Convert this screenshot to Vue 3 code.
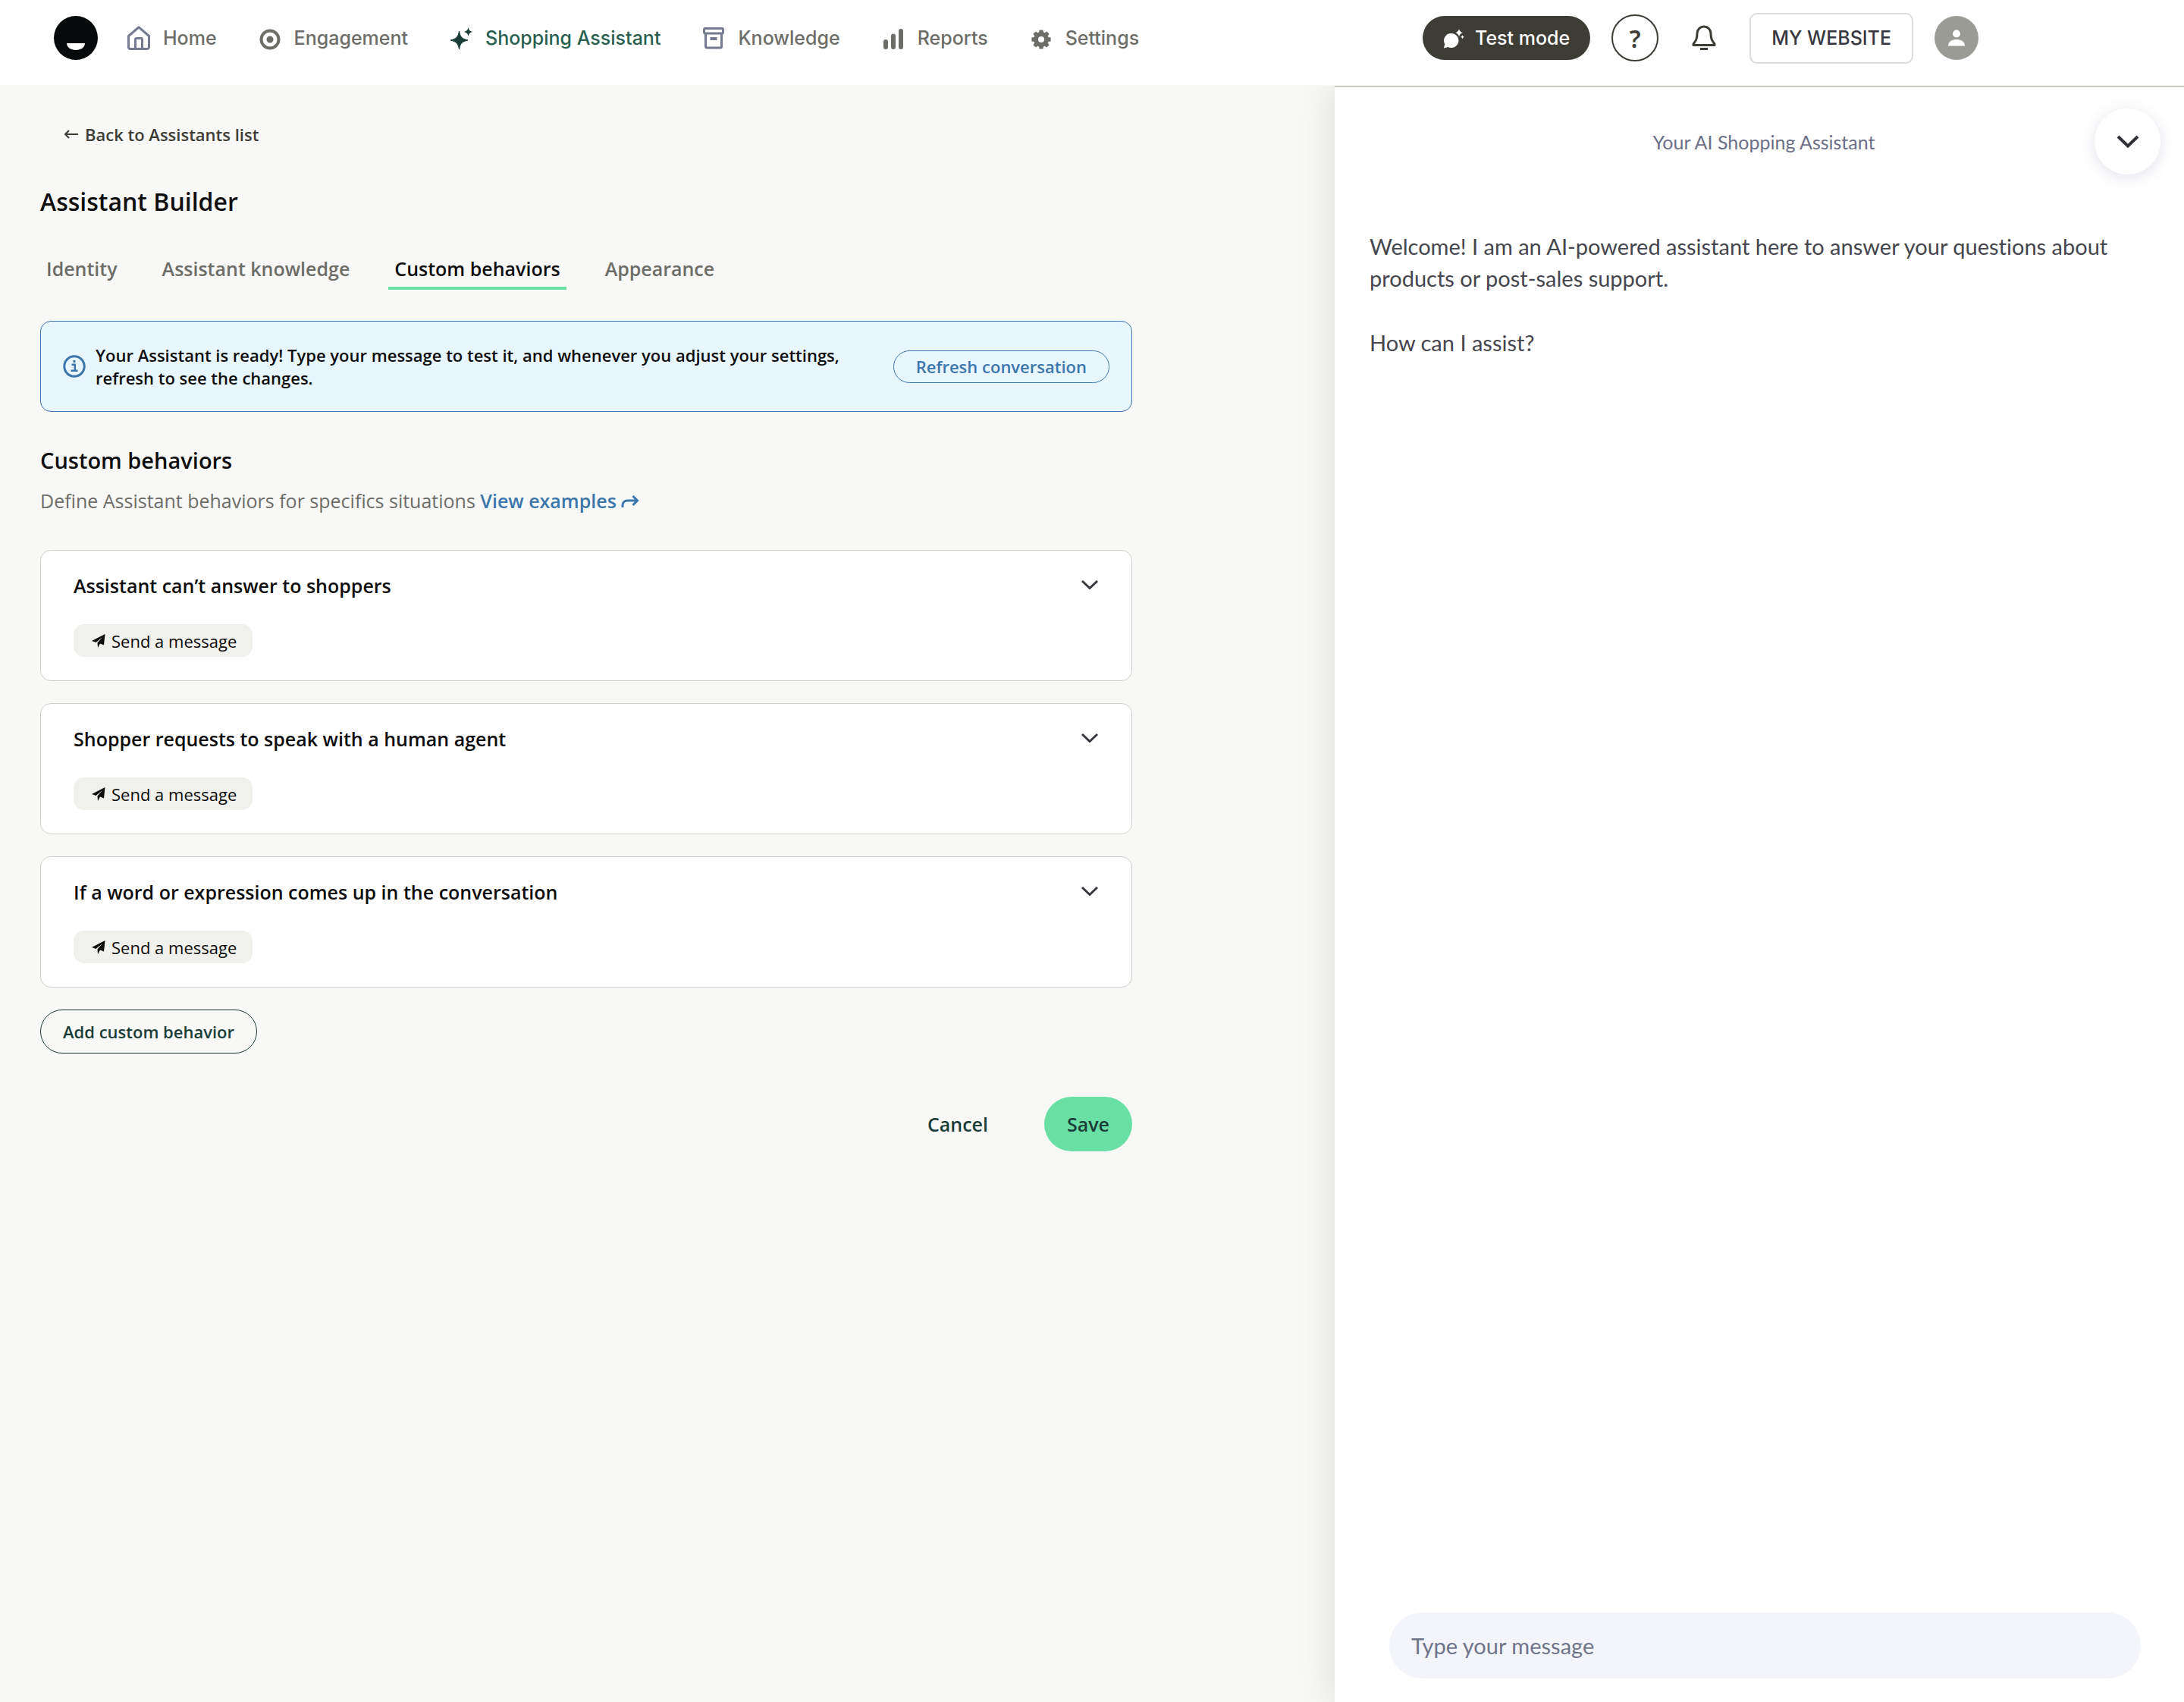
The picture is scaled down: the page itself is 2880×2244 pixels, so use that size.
<template>
  <div class="app">
    <header class="topbar">
      <a href="#" class="logo" aria-label="Homepage">
        <svg viewBox="0 0 58 58"><circle cx="29" cy="29" r="29" fill="#060a0a" /><path d="M17 36h24c0 5-5 9-12 9s-12-4-12-9z" fill="#fff" /></svg>
      </a>
      <nav class="main-nav">
        <a v-for="item in navItems" :key="item.label" href="#" class="nav-link" :class="{ active: item.active }">
          <svg v-if="item.icon === 'home'" class="nav-icon" viewBox="0 0 30 32" fill="none" stroke="#747a90" stroke-width="3">
            <path d="M1.500 13.500L15 1.800l13.500 11.700V28a2.500 2.500 0 0 1-2.500 2.500H4A2.500 2.500 0 0 1 1.500 28z" stroke-linejoin="round" />
            <path d="M10.500 30V18a1.500 1.500 0 0 1 1.500-1.500h6a1.500 1.500 0 0 1 1.500 1.500v12" />
          </svg>
          <svg v-else-if="item.icon === 'target'" class="nav-icon" viewBox="0 0 30 32">
            <circle cx="15" cy="18" r="11.500" fill="none" stroke="#6d6d68" stroke-width="4" />
            <circle cx="15" cy="18" r="4.500" fill="#6d6d68" />
          </svg>
          <svg v-else-if="item.icon === 'sparkle'" class="nav-icon" viewBox="0 0 30 32" fill="#1a3d38">
            <path d="M12.500 7c1.500 8 3.500 10 11.500 12-8 2-10 4-11.500 12C11 23 9 21 1 19c8-2 10-4 11.500-12z" stroke="#1a3d38" stroke-width="1" />
            <path d="M24.500 2c.8 3.800 1.700 4.700 5.500 6-3.800 1.300-4.700 2.200-5.500 6-.8-3.800-1.700-4.700-5.500-6 3.800-1.300 4.700-2.200 5.500-6z" />
          </svg>
          <svg v-else-if="item.icon === 'box'" class="nav-icon" viewBox="0 0 30 32">
            <g fill="none" stroke="#747a90" stroke-width="3">
              <rect x="2.500" y="3.500" width="25" height="6.500" rx="1.500" />
              <path d="M4.500 10v17a2 2 0 0 0 2 2h17a2 2 0 0 0 2-2V10" />
            </g>
            <rect x="10.500" y="15" width="9" height="4" fill="#747a90" />
          </svg>
          <svg v-else-if="item.icon === 'bars'" class="nav-icon" viewBox="0 0 30 32" stroke="#6d6d68" stroke-width="6" stroke-linecap="round">
            <path d="M5 21v7M15 13.500V28M25 7v21" />
          </svg>
          <svg v-else class="nav-icon" viewBox="0 0 30 32">
            <circle cx="15" cy="18" r="7" fill="none" stroke="#6d6d68" stroke-width="6" />
            <path v-for="n in 8" :key="n" d="M12 9l.6-3.600h4.800L18 9z" fill="#6d6d68" :transform="`rotate(${n * 45} 15 18)`" />
          </svg>
          {{ item.label }}
        </a>
      </nav>
      <div class="actions">
        <button class="test-mode">
          <svg viewBox="0 0 28 28" fill="#fff">
            <path d="M11 8a9.500 9.500 0 1 1-4.500 17.900L1 27.500l1.200-5.500A9.500 9.500 0 0 1 11 8z" />
            <path d="M21 0c1 5 2 6 6 7-4 1.500-5 2.500-6 7-1-4.500-2-5.500-6-7 4-1 5-2 6-7z" stroke="#3d3d36" stroke-width="1" />
            <path d="M25.500 10c.4 1.800.8 2.200 2.500 2.700-1.700.6-2.100 1-2.500 2.700-.4-1.700-.8-2.100-2.500-2.700 1.700-.5 2.100-.9 2.500-2.700z" />
          </svg>
          Test mode
        </button>
        <button class="help" aria-label="Help">?</button>
        <button class="bell" aria-label="Notifications">
          <svg viewBox="0 0 32 34" fill="none" stroke="#3d3d36" stroke-width="3">
            <path d="M16 2a9 9 0 0 0-9 9c0 7-1.500 9.500-5 14v1.500h28V25c-3.500-4.500-5-7-5-14a9 9 0 0 0-9-9z" stroke-linejoin="round" />
            <path d="M11 31.500h10" />
          </svg>
        </button>
        <button class="website">MY WEBSITE</button>
        <button class="avatar" aria-label="Account">
          <svg viewBox="0 0 22 22" fill="#fff"><circle cx="11" cy="5.500" r="5" /><path d="M0 21.500c0-5 4-8.500 11-8.500s11 3.500 11 8.500z" /></svg>
        </button>
      </div>
    </header>

    <div class="content">
      <main class="builder">
        <a href="#" class="back">
          <svg viewBox="0 0 20 16" fill="none" stroke="#3d3d36" stroke-width="2"><path d="M7 3L2 8l5 5M2 8h17" /></svg>
          Back to Assistants list
        </a>
        <h1>Assistant Builder</h1>
        <div class="tabs" role="tablist">
          <button
            v-for="tab in tabs"
            :key="tab"
            role="tab"
            class="tab"
            :class="{ selected: tab === currentTab }"
            :aria-selected="tab === currentTab"
            @click="currentTab = tab"
          >{{ tab }}</button>
        </div>

        <div class="banner">
          <svg class="info" viewBox="0 0 30 30" fill="none" stroke="#3c76ab">
            <circle cx="15" cy="15" r="13.200" stroke-width="3" />
            <path d="M11.500 12.800h4.300v8M10.500 20.800h9" stroke-width="2.400" />
            <circle cx="15" cy="8.500" r="1.700" fill="#3c76ab" stroke="none" />
          </svg>
          <p>Your Assistant is ready! Type your message to test it, and whenever you adjust your settings, refresh to see the changes.</p>
          <button class="refresh">Refresh conversation</button>
        </div>

        <h2>Custom behaviors</h2>
        <p class="description">
          Define Assistant behaviors for specifics situations
          <a href="#">View examples <svg viewBox="0 0 24 18" fill="none" stroke="#3c76ab" stroke-width="3"><path d="M2 17v-3a6 6 0 0 1 6-6h13M15.500 2l6 6-6 6" /></svg></a>
        </p>

        <section v-for="behavior in behaviors" :key="behavior" class="card">
          <div class="card-head">
            <h3>{{ behavior }}</h3>
            <button class="toggle" aria-label="Expand">
              <svg viewBox="0 0 24 16" fill="none" stroke="#36373f" stroke-width="3"><path d="M2 3l10 9.500L22 3" /></svg>
            </button>
          </div>
          <span class="chip">
            <svg viewBox="0 0 18 18" fill="#0d0d0d"><path d="M17.500 0L16 14.500l-5-2L8 18l-.5-6.500L14 4 5.500 11 0 9z" /></svg>
            Send a message
          </span>
        </section>

        <button class="add">Add custom behavior</button>
        <div class="footer">
          <button class="cancel">Cancel</button>
          <button class="save">Save</button>
        </div>
      </main>

      <aside class="chat">
        <div class="chat-head">
          <span>Your AI Shopping Assistant</span>
          <button class="collapse" aria-label="Close chat">
            <svg viewBox="0 0 30 20" fill="none" stroke="#2f3038" stroke-width="4"><path d="M2 3l13 12.500L28 3" /></svg>
          </button>
        </div>
        <div class="messages">
          <p>Welcome! I am an AI-powered assistant here to answer your questions about products or post-sales support.</p>
          <p>How can I assist?</p>
        </div>
        <input v-model="message" type="text" class="message-input" placeholder="Type your message" aria-label="Type your message">
      </aside>
    </div>
  </div>
</template>

<script setup>
import { ref } from 'vue';

const navItems = [
  { label: 'Home', icon: 'home' },
  { label: 'Engagement', icon: 'target' },
  { label: 'Shopping Assistant', icon: 'sparkle', active: true },
  { label: 'Knowledge', icon: 'box' },
  { label: 'Reports', icon: 'bars' },
  { label: 'Settings', icon: 'gear' },
];

const tabs = ['Identity', 'Assistant knowledge', 'Custom behaviors', 'Appearance'];
const currentTab = ref('Custom behaviors');

const behaviors = [
  'Assistant can’t answer to shoppers',
  'Shopper requests to speak with a human agent',
  'If a word or expression comes up in the conversation',
];

const message = ref('');
</script>

<style>
body {
  margin: 0;
  background: #f8f8f6;
}
</style>

<style scoped>
* {
  box-sizing: border-box;
}

h1, h2, h3, p {
  margin: 0;
}

button {
  padding: 0;
  border: none;
  background: none;
  font: inherit;
  color: inherit;
  cursor: pointer;
}

a {
  text-decoration: none;
}

.app {
  display: flex;
  flex-direction: column;
  min-height: 100vh;
  font-family: "Open Sans", sans-serif;
  font-size: 25px;
  color: #0d0d0d;
}

/* Top bar */
.topbar {
  display: flex;
  align-items: center;
  height: 112px;
  padding: 0 271px 12px 71px;
  background: #fff;
  font-family: Inter, sans-serif;
}

.logo, .logo svg {
  display: block;
  width: 58px;
  height: 58px;
}

.main-nav {
  display: flex;
  gap: 55px;
  margin-left: 39px;
}

.nav-link {
  display: flex;
  align-items: center;
  gap: 17px;
  color: #6d6d68;
  font-weight: 500;
  line-height: 28px;
  white-space: nowrap;
}

.nav-link.active {
  color: #285f50;
}

.nav-icon {
  width: 30px;
  height: 32px;
}

.actions {
  display: flex;
  align-items: center;
  margin-left: auto;
  gap: 28px;
}

.test-mode {
  display: flex;
  align-items: center;
  gap: 14px;
  height: 58px;
  padding: 0 27px;
  border-radius: 29px;
  background: #3d3d36;
  color: #fff;
  font-weight: 500;
}

.test-mode svg {
  width: 28px;
  height: 28px;
}

.help {
  width: 62px;
  height: 62px;
  border: 2px solid #3d3d36;
  border-radius: 50%;
  color: #3d3d36;
  font: 600 32px "Noto Sans", sans-serif;
}

.bell {
  width: 64px;
  height: 34px;
}

.bell svg {
  width: 32px;
  height: 34px;
}

.website {
  height: 67px;
  padding: 0 27px;
  border: 2px solid #dcdcda;
  border-radius: 10px;
  color: #36373f;
  font-weight: 500;
}

.avatar {
  width: 58px;
  height: 58px;
  border-radius: 50%;
  background: #9b9b95;
}

.avatar svg {
  width: 22px;
  height: 22px;
}

/* Page */
.content {
  display: flex;
  justify-content: space-between;
  flex: 1;
}

.builder {
  width: 50%;
  margin-left: 53px;
  padding-top: 48px;
}

.back {
  display: flex;
  align-items: center;
  gap: 8px;
  margin-left: 31px;
  color: #3d3d36;
  font-size: 22px;
  font-weight: 600;
  line-height: 34px;
}

.back svg {
  width: 20px;
  height: 16px;
}

h1 {
  margin-top: 50px;
  font-size: 32px;
  font-weight: 600;
  line-height: 44px;
}

.tabs {
  display: flex;
  gap: 43px;
  margin-top: 44px;
}

.tab {
  padding: 0 8px 2px;
  border-bottom: 4px solid transparent;
  color: #6d6d68;
  font-weight: 600;
  line-height: 44px;
}

.tab.selected {
  border-color: #6adfa5;
  color: #0d0d0d;
}

.banner {
  display: flex;
  align-items: center;
  height: 120px;
  margin-top: 41px;
  padding: 0 29px;
  border: 1px solid #3c76ab;
  border-radius: 14px;
  background: #e8f7fe;
}

.info {
  width: 30px;
  height: 30px;
}

.banner p {
  flex: 1;
  margin: 0 60px 0 13px;
  font-size: 22px;
  font-weight: 600;
  line-height: 30px;
}

.refresh {
  height: 43px;
  padding: 0 29px;
  border: 1px solid #3c76ab;
  border-radius: 22px;
  color: #3c76ab;
  font-size: 22px;
  font-weight: 600;
}

h2 {
  margin-top: 43px;
  font-size: 29px;
  font-weight: 600;
  line-height: 42px;
}

.description {
  margin: 14px 0 47px;
  color: #6d6d68;
  line-height: 36px;
}

.description a {
  color: #3c76ab;
  font-weight: 600;
}

.description svg {
  width: 24px;
  height: 18px;
}

.card {
  height: 173px;
  margin-bottom: 29px;
  padding: 27px 43px;
  border: 1px solid #cfcfca;
  border-radius: 14px;
  background: #fff;
}

.card-head {
  display: flex;
  justify-content: space-between;
  margin-bottom: 32px;
}

h3 {
  font-size: 25px;
  font-weight: 600;
  line-height: 38px;
}

.toggle {
  height: 36px;
}

.toggle svg, .chip svg, .collapse svg, .bell svg, .avatar svg {
  display: block;
  margin: auto;
}

.toggle svg {
  width: 24px;
  height: 16px;
}

.chip {
  display: inline-flex;
  align-items: center;
  gap: 8px;
  height: 43px;
  padding: 0 21px 0 24px;
  border-radius: 14px;
  background: #f0f1ec;
  font-size: 22px;
}

.chip svg {
  width: 18px;
  height: 18px;
}

.add {
  height: 58px;
  padding: 0 29px;
  border: 1px solid #1a3d38;
  border-radius: 29px;
  color: #1a3d38;
  font-size: 22px;
  font-weight: 600;
}

.footer {
  display: flex;
  justify-content: flex-end;
  gap: 44px;
  margin-top: 57px;
  color: #1a3d38;
  font-weight: 600;
}

.footer button {
  height: 72px;
  padding: 0 30px;
  border-radius: 36px;
}

.save {
  background: #6adfa5;
}

/* Chat preview */
.chat {
  display: flex;
  flex-direction: column;
  width: 1120px;
  margin-top: 1px;
  border-top: 2px solid #c9cac0;
  background: #fff;
  box-shadow: 0 0 48px rgba(0, 0, 0, 0.12);
  clip-path: inset(0 0 0 -60px);
  font-family: Lato, sans-serif;
  font-variant-ligatures: none;
  color: #45464e;
}

.chat-head {
  display: grid;
  grid-template-columns: 1fr auto 1fr;
  align-items: center;
  padding: 28px 31px 0 43px;
  color: #6b7088;
}

.chat-head span {
  grid-column: 2;
}

.collapse {
  justify-self: end;
  width: 87px;
  height: 87px;
  border-radius: 50%;
  background: #fff;
  box-shadow: 0 4px 20px rgba(60, 60, 130, 0.14);
}

.collapse svg {
  width: 30px;
  height: 20px;
}

.messages {
  flex: 1;
  padding: 74px 90px 0 46px;
  font-size: 29px;
  line-height: 42px;
}

.messages p {
  margin-bottom: 43px;
}

.message-input {
  height: 87px;
  margin: 0 57px 31px 72px;
  padding: 0 29px;
  border: none;
  border-radius: 44px;
  background: #f4f5fa;
  font: 29px Lato, sans-serif;
  color: #45464e;
}

.message-input::placeholder {
  color: #6f748a;
}
</style>
